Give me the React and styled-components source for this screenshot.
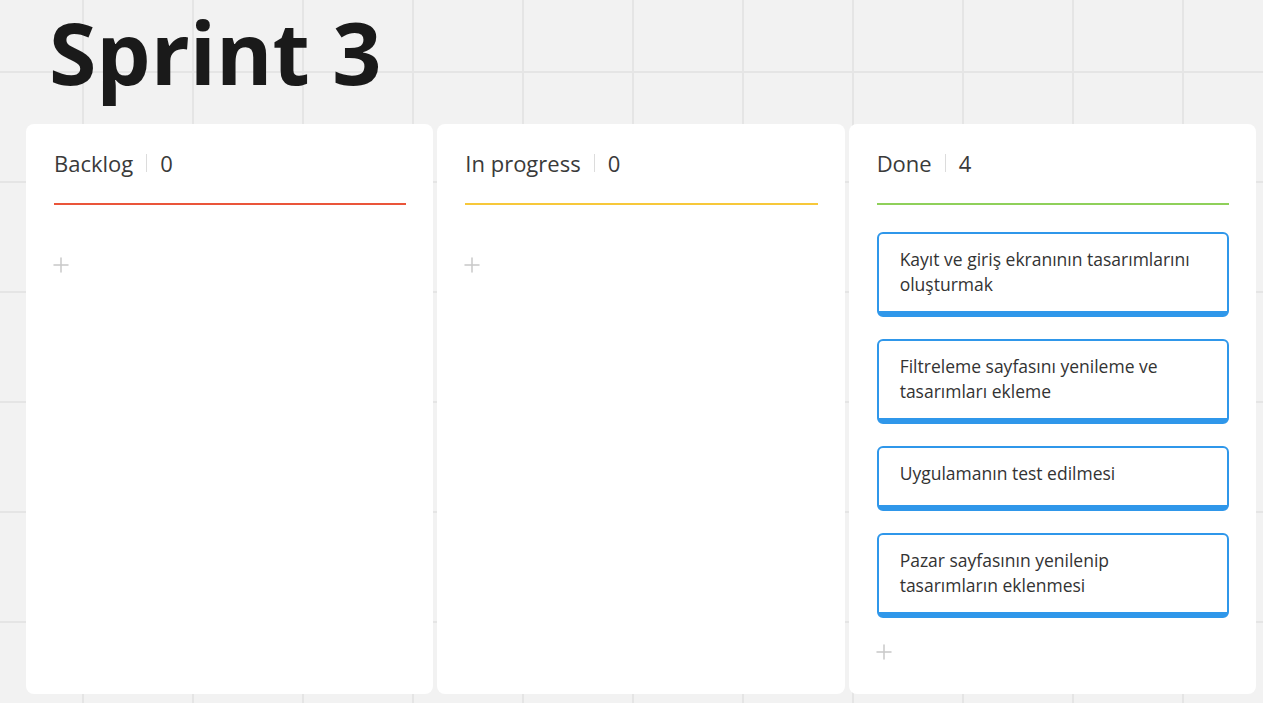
import React from "react";
import styled, { createGlobalStyle } from "styled-components";
import { Plus } from "lucide-react";

const GlobalStyle = createGlobalStyle`
  html, body { margin: 0; padding: 0; }
  body {
    font-family: "Open Sans", "Noto Sans", sans-serif;
    background-color: #f2f2f2;
    background-image:
      linear-gradient(to right, #e5e5e5 0, #e5e5e5 2px, transparent 2px),
      linear-gradient(to bottom, #e5e5e5 0, #e5e5e5 2px, transparent 2px);
    background-size: 110px 110px;
    background-position: 82px 71px;
  }
`;

const Page = styled.div`
  height: 100vh;
  box-sizing: border-box;
  display: flex;
  flex-direction: column;
  padding: 0 7px 9px 26px;
`;

const Title = styled.h1`
  margin: 0 0 20px 23px;
  font-size: 86px;
  line-height: 104px;
  font-weight: 700;
  color: #1a1a1a;
  letter-spacing: 0;
`;

const Board = styled.div`
  flex: 1;
  display: grid;
  grid-template-columns: repeat(3, 1fr);
  gap: 4px;
  min-height: 0;
`;

const Panel = styled.section`
  background: #ffffff;
  border-radius: 8px;
  padding: 24px 27px 0 28px;
  display: flex;
  flex-direction: column;
`;

const Header = styled.div`
  display: flex;
  align-items: center;
  font-size: 22px;
  line-height: 30px;
  color: #3a3a3a;
`;

const Sep = styled.span`
  width: 1px;
  height: 18px;
  background: #dcdcdc;
  margin: 0 13px;
`;

const Divider = styled.div`
  height: 2px;
  margin-top: 25px;
  background: ${(p) => p.$color};
`;

const List = styled.div`
  display: flex;
  flex-direction: column;
  gap: 22px;
  padding-top: ${(p) => (p.$empty ? 48 : 27)}px;
`;

const Card = styled.div`
  box-sizing: border-box;
  min-height: 65px;
  border: 2px solid #2f97ea;
  border-bottom-width: 6px;
  border-radius: 6px;
  padding: 13px 28px 14px 21px;
  font-size: 17.5px;
  line-height: 25px;
  color: #333333;
  background: #fff;
`;

const AddRow = styled.div`
  height: 24px;
  display: flex;
  align-items: center;
  margin-left: -5px;
  color: #c8c8c8;
`;

const columns = [
  { name: "Backlog", color: "#ea553a", items: [] },
  { name: "In progress", color: "#f7c83a", items: [] },
  {
    name: "Done",
    color: "#8fd05a",
    items: [
      "Kayıt ve giriş ekranının tasarımlarını oluşturmak",
      "Filtreleme sayfasını yenileme ve tasarımları ekleme",
      "Uygulamanın test edilmesi",
      "Pazar sayfasının yenilenip tasarımların eklenmesi",
    ],
  },
];

export default function App() {
  return (
    <>
      <GlobalStyle />
      <Page>
        <Title>Sprint 3</Title>
        <Board>
          {columns.map((c) => (
            <Panel key={c.name}>
              <Header>
                <span>{c.name}</span>
                <Sep />
                <span>{c.items.length}</span>
              </Header>
              <Divider $color={c.color} />
              <List $empty={c.items.length === 0}>
                {c.items.map((t) => (
                  <Card key={t}>{t}</Card>
                ))}
                <AddRow>
                  <Plus size={24} strokeWidth={1.5} />
                </AddRow>
              </List>
            </Panel>
          ))}
        </Board>
      </Page>
    </>
  );
}
